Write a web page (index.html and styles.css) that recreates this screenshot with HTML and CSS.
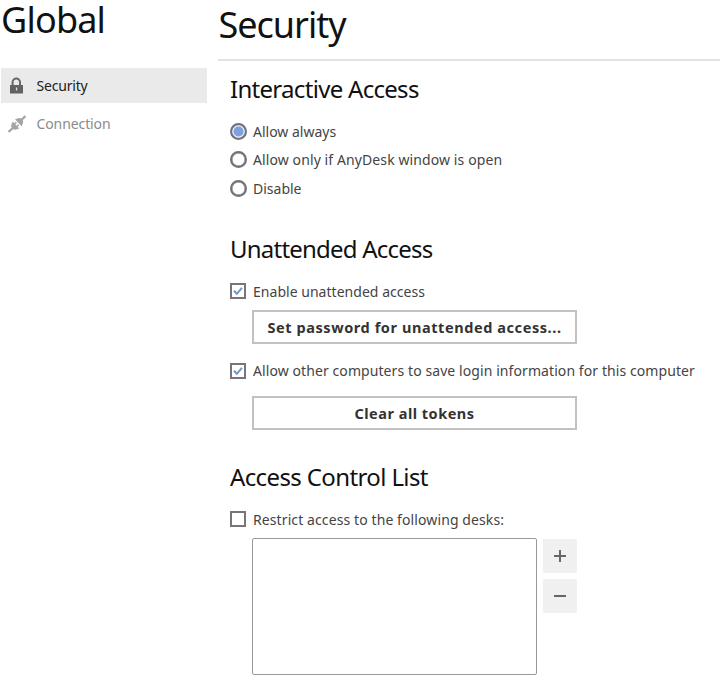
FILE: index.html
```html
<!DOCTYPE html>
<html lang="en">
<head>
<meta charset="utf-8">
<title>Security settings</title>
<link rel="stylesheet" href="styles.css">
</head>
<body>
<div class="app">
  <aside class="sidebar">
    <h1 class="title side-title"><span>Global</span></h1>
    <nav class="nav">
      <a class="nav-item active">
        <svg class="nav-icon" viewBox="0 0 18 18"><path d="M4.600 9V5.200a3.700 3.700 0 0 1 7.400 0V9" fill="none" stroke="#666" stroke-width="2"/><path fill="#626262" d="M2 8h13v8.500H2z"/><path fill="#ddd" d="M7.900 10.500h1.300v3H7.900z"/></svg>
        <span class="t-nav1">Security</span>
      </a>
      <a class="nav-item">
        <svg class="nav-icon" viewBox="0 0 18 18"><g transform="rotate(-43 9 9)" fill="#a4a4a4"><path d="M-2.500 7.900H2.500L4 5.800 7.600 4.200v2.300h2.200v1.500H7.600v2h2.200v1.500H7.600v2.300L4 12.200 2.500 10.100h-5zM20.500 7.900h-4.500L14.500 5.800 10.800 4.200v9.600l3.700-1.600 1.500-2.100h4.500z"/></g></svg>
        <span class="t-nav2">Connection</span>
      </a>
    </nav>
  </aside>
  <main class="main">
    <h1 class="title main-title"><span>Security</span></h1>
    <section class="group interactive">
      <h2 class="t-h1">Interactive Access</h2>
      <label class="row"><i class="radio on"></i><span class="t-r1">Allow always</span></label>
      <label class="row"><i class="radio"></i><span class="t-r2">Allow only if AnyDesk window is open</span></label>
      <label class="row"><i class="radio"></i><span class="t-r3">Disable</span></label>
    </section>
    <section class="group unattended">
      <h2 class="t-h2">Unattended Access</h2>
      <label class="row"><i class="check"><svg viewBox="0 0 12 12"><path d="M2 5.800 4.800 8.800 10 2.800"/></svg></i><span class="t-c1">Enable unattended access</span></label>
      <button class="btn"><span class="t-b1">Set password for unattended access...</span></button>
      <label class="row second"><i class="check"><svg viewBox="0 0 12 12"><path d="M2 5.800 4.800 8.800 10 2.800"/></svg></i><span class="t-c2">Allow other computers to save login information for this computer</span></label>
      <button class="btn tokens"><span class="t-b2">Clear all tokens</span></button>
    </section>
    <section class="group acl">
      <h2 class="t-h3">Access Control List</h2>
      <label class="row"><i class="check"></i><span class="t-c3">Restrict access to the following desks:</span></label>
      <div class="list-area">
        <div class="list"></div>
        <div class="tools">
          <button class="tool"><svg viewBox="0 0 12 12"><path d="M0 6h12M6 0v12"/></svg></button>
          <button class="tool"><svg viewBox="0 0 12 12"><path d="M0 6h12"/></svg></button>
        </div>
      </div>
    </section>
  </main>
</div>
</body>
</html>
```
FILE: styles.css
```css
* { box-sizing: border-box; }
body {
  margin: 0;
  background: #fff;
  color: #444;
  font: 14px/20px "Noto Sans", "Open Sans", sans-serif;
}
.app { display: flex; width: 720px; height: 680px; }
.sidebar { width: 218px; flex: none; padding-left: 1px; }
.main { flex: 1; min-width: 0; white-space: nowrap; }
h1, h2 { margin: 0; font-weight: 400; color: #111; }
.title { font-size: 36px; line-height: 40px; letter-spacing: -0.8px; }
.side-title { height: 68px; }
.main-title { height: 61px; padding-top: 5px; border-bottom: 2px solid #e2e2e2; }
.main-title span { margin-left: 0.5px; letter-spacing: -1px; }
.nav-item {
  display: flex;
  align-items: center;
  width: 206px;
  height: 35px;
  padding-left: 7px;
  gap: 10.5px;
  color: #8c8c8c;
}
.nav-item + .nav-item { margin-top: 3px; }
.nav-item.active { background: #eaeaea; color: #222; }
.nav-icon { width: 18px; height: 18px; overflow: visible; }
.t-nav1 { letter-spacing: -0.2px; }
.t-nav2 { letter-spacing: -0.1px; }
.group { padding-left: 12px; }
.group h2 { font-size: 24px; line-height: 32px; letter-spacing: -0.7px; }
.group .t-h2 { letter-spacing: -0.78px; }
.group .t-h3 { letter-spacing: -0.62px; }
.interactive { height: 160px; padding-top: 12px; }
.interactive h2 { margin-bottom: 12px; }
.row { display: flex; align-items: center; gap: 6px; height: 28.5px; }
.row span { padding-top: 1px; }
.t-r2 { letter-spacing: 0.1px; }
.t-c1 { letter-spacing: 0.03px; }
.t-c2 { letter-spacing: 0.085px; }
.t-c3 { letter-spacing: 0.1px; }
.radio {
  display: block;
  width: 17px;
  height: 17px;
  flex: none;
  border: 2px solid #717176;
  border-radius: 50%;
  box-shadow: inset 0 0 0 0.5px #717176;
}
.radio.on { background: #7f9fdf; box-shadow: inset 0 0 0 1.5px #e4ecfa; }
.check {
  display: flex;
  width: 16px;
  height: 16px;
  flex: none;
  border: 2px solid #77747a;
  margin-right: 1px;
}
.check svg { width: 12px; height: 12px; fill: none; stroke: #7697bd; stroke-width: 2; }
.unattended { height: 228px; padding-top: 12px; }
.unattended h2, .acl h2 { margin-bottom: 12px; }
.unattended .row, .acl .row { height: 28px; }
.unattended .second span { padding-top: 0; }
.btn {
  display: flex;
  align-items: center;
  justify-content: center;
  width: 325px;
  height: 34px;
  margin: 5px 0 0 22px;
  padding: 0;
  border: 2px solid #c2c0c1;
  background: #fff;
  color: #333;
  font: 700 14.5px/20px "Noto Sans", "Open Sans", sans-serif;
  letter-spacing: 0.58px;
}
.t-b2 { letter-spacing: 0.5px; }
.unattended .second { margin-top: 13px; }
.btn.tokens { margin-top: 11px; }
.acl { padding-top: 12px; }
.list-area { display: flex; gap: 6px; margin: 5px 0 0 22px; }
.list { width: 285px; height: 137px; border: 1px solid #999; border-radius: 2px; }
.tools { display: flex; flex-direction: column; gap: 6px; padding-top: 1px; }
.tool {
  display: flex;
  align-items: center;
  justify-content: center;
  width: 34px;
  height: 34px;
  padding: 0;
  border: 0;
  background: #f0f0f0;
}
.tool svg { width: 12px; height: 12px; stroke: #666; stroke-width: 2; }
```
